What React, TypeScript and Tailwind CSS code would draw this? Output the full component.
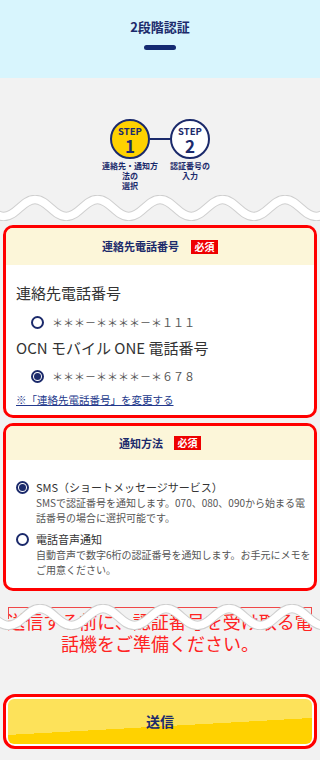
import React from 'react'

// sine-like wave made of cubic curves, crest at `phase`
function wavePath(phase: number, period: number, width: number) {
  const h = period / 2
  const top = 4.5
  const bottom = 21.5
  let x = phase - period * 2
  let d = `M ${x} ${top}`
  let up = true
  while (x < width + period) {
    const y0 = up ? top : bottom
    const y1 = up ? bottom : top
    d += ` C ${x + h * 0.4} ${y0} ${x + h * 0.6} ${y1} ${x + h} ${y1}`
    x += h
    up = !up
  }
  return d
}

function Wave({ phase, period }: { phase: number; period: number }) {
  const d = wavePath(phase, period, 320)
  return (
    <svg width="320" height="26" viewBox="0 0 320 26" className="block">
      <path d={d} fill="none" stroke="#cfcfcf" strokeWidth="9.5" />
      <path d={d} fill="none" stroke="#ffffff" strokeWidth="7.5" />
    </svg>
  )
}

function Radio({ checked }: { checked?: boolean }) {
  return (
    <span className="flex h-[13px] w-[13px] shrink-0 items-center justify-center rounded-full border-2 border-[#1b2a6b] bg-white">
      {checked && <span className="h-[7px] w-[7px] rounded-full bg-[#1b2a6b]" />}
    </span>
  )
}

function Required() {
  return (
    <span className="flex h-[14px] w-[27px] items-center justify-center bg-[#ee0000] text-[10px] font-bold leading-none text-white">
      必須
    </span>
  )
}

export default function App() {
  return (
    <div className="min-h-[760px] w-[320px] bg-[#f2f2f2] font-['Noto_Sans_CJK_JP','Noto_Sans',sans-serif] text-[#333]">
      {/* Header */}
      <div className="flex h-[78px] flex-col items-center bg-[#d8f5fd] pt-[18px]">
        <h1 className="text-[13px] font-bold leading-[18px] text-[#1b2a6b]">2段階認証</h1>
        <div className="mt-[9px] h-[5px] w-[32px] rounded-full bg-[#142a72]" />
      </div>

      {/* Steps */}
      <div className="flex h-[117px] justify-center pt-[41px]">
        <div className="relative flex">
          <div className="absolute left-[50px] top-[19px] h-[2px] w-[20px] bg-[#1b2a6b]" />
          <div className="flex w-[60px] flex-col items-center">
            <div className="flex h-[40px] w-[40px] flex-col items-center justify-center rounded-full border-2 border-[#1b2a6b] bg-[#ffd200] pt-[1px]">
              <span className="text-[9.5px] font-bold leading-[11px] text-[#1b2a6b]">STEP</span>
              <span className="text-[17px] font-bold leading-[17px] text-[#1b2a6b]">1</span>
            </div>
            <p className="mt-[2px] text-center text-[8px] font-bold leading-[10px] text-[#1b2a6b]">
              連絡先・通知方<br />法の<br />選択
            </p>
          </div>
          <div className="flex w-[60px] flex-col items-center">
            <div className="flex h-[40px] w-[40px] flex-col items-center justify-center rounded-full border-2 border-[#1b2a6b] bg-white pt-[1px]">
              <span className="text-[9.5px] font-bold leading-[11px] text-[#1b2a6b]">STEP</span>
              <span className="text-[17px] font-bold leading-[17px] text-[#1b2a6b]">2</span>
            </div>
            <p className="mt-[2px] text-center text-[8px] font-bold leading-[10px] text-[#1b2a6b]">
              認証番号の<br />入力
            </p>
          </div>
        </div>
      </div>

      <Wave phase={35} period={62.5} />

      {/* Contact phone card */}
      <div className="mx-[3px] mt-[4px] rounded-[10px] border-[3px] border-[#ff0000] bg-white">
        <div className="flex h-[37px] items-center justify-center gap-[12px] rounded-t-[7px] bg-[#fcf6d9]">
          <span className="text-[11px] font-bold text-[#1b2a6b]">連絡先電話番号</span>
          <Required />
        </div>
        <div className="px-[10px] pb-[7px] pt-[18px]">
          <p className="text-[15px] leading-[20px] text-[#333]">連絡先電話番号</p>
          <label className="mt-[10px] flex h-[18px] items-center gap-[8px] pl-[15px]">
            <Radio />
            <span className="text-[11px] text-[#555]">＊＊＊－＊＊＊＊－＊１１１</span>
          </label>
          <p className="mt-[7px] text-[15px] leading-[20px] text-[#333]">OCN モバイル ONE 電話番号</p>
          <label className="mt-[9px] flex h-[18px] items-center gap-[8px] pl-[15px]">
            <Radio checked />
            <span className="text-[11px] text-[#555]">＊＊＊－＊＊＊＊－＊６７８</span>
          </label>
          <a className="mt-[7px] block text-[10.5px] leading-[16px] text-[#23398c] underline">
            ※「連絡先電話番号」を変更する
          </a>
        </div>
      </div>

      {/* Notification method card */}
      <div className="mx-[3px] mt-[5px] rounded-[10px] border-[3px] border-[#ff0000] bg-white">
        <div className="flex h-[34px] items-center justify-center gap-[11px] rounded-t-[7px] bg-[#fcf6d9]">
          <span className="text-[11px] font-bold text-[#1b2a6b]">通知方法</span>
          <Required />
        </div>
        <div className="pb-[11px] pl-[10px] pr-[4px] pt-[19px]">
          <label className="flex gap-[7px]">
            <span className="flex h-[16px] items-center">
              <Radio checked />
            </span>
            <span className="flex flex-col">
              <span className="text-[11px] leading-[16px] text-[#333]">SMS（ショートメッセージサービス）</span>
              <span className="whitespace-nowrap text-[10px] leading-[15px] text-[#555]">
                SMSで認証番号を通知します。070、080、090から始まる電<br />話番号の場合に選択可能です。
              </span>
            </span>
          </label>
          <label className="mt-[6px] flex gap-[7px]">
            <span className="flex h-[16px] items-center">
              <Radio />
            </span>
            <span className="flex flex-col">
              <span className="text-[11px] leading-[16px] text-[#333]">電話音声通知</span>
              <span className="whitespace-nowrap text-[10px] leading-[15px] text-[#555]">
                自動音声で数字6桁の認証番号を通知します。お手元にメモを<br />ご用意ください。
              </span>
            </span>
          </label>
        </div>
      </div>

      {/* Notice, cut by a wave */}
      <div className="relative h-[103px] overflow-hidden">
        <p className="whitespace-nowrap pt-[19px] text-center text-[18px] leading-[22px] text-[#ff2222]">
          送信する前に、認証番号を受け取る電<br />話機をご準備ください。
        </p>
        <div className="absolute left-0 right-0 top-0 h-[20px] bg-[#f2f2f2]" />
        <div className="absolute left-[8px] right-[8px] top-[16px] h-[12px] border border-b-0 border-[#f04848]" />
        <div className="absolute left-0 top-[13px]">
          <Wave phase={40} period={63} />
        </div>
      </div>

      {/* Submit */}
      <div className="mx-[3px] h-[55px] rounded-[12px] border-[3px] border-[#ff0000] bg-white p-[2px]">
        <button className="flex h-full w-full items-center justify-center rounded-[6px] bg-[linear-gradient(176.8deg,#fde25a_58%,#ffd200_58%)] text-[14px] font-bold text-[#1b2a6b]">
          送信
        </button>
      </div>
    </div>
  )
}
